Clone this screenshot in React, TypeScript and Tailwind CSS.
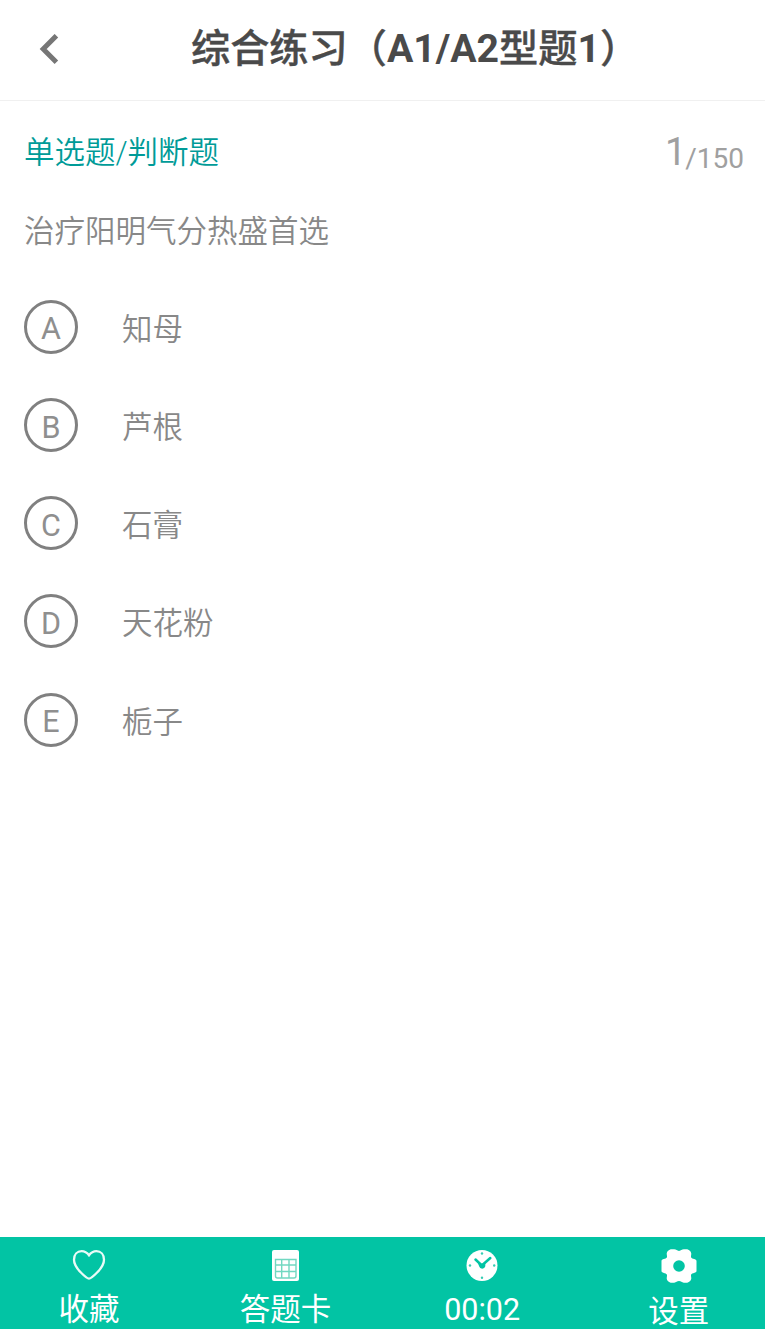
import React from "react";

type Option = { key: string; text: string };

const options: Option[] = [
  { key: "A", text: "知母" },
  { key: "B", text: "芦根" },
  { key: "C", text: "石膏" },
  { key: "D", text: "天花粉" },
  { key: "E", text: "栀子" },
];

const BackIcon = () => (
  <svg width="20" height="30" viewBox="0 0 20 30" fill="none">
    <path d="M17.4 1.7 4.2 15l13.2 13.2" stroke="#767676" strokeWidth="5" />
  </svg>
);

const HeartIcon = () => (
  <svg width="34" height="32" viewBox="0 0 34 32" fill="none">
    <path
      d="M17 29.7C15.4 29.7 2 19.6 2 10.7 2 5.5 5.2 2.2 9.6 2.2c3.4 0 5.4 1.4 7.4 4.1 2-2.7 4-4.1 7.4-4.1 4.4 0 7.6 3.3 7.6 8.5 0 8.900-13.400 19-15 19Z"
      stroke="#e9fbf7"
      strokeWidth="2.3"
    />
  </svg>
);

const CardIcon = () => (
  <svg width="27" height="32" viewBox="0 0 27 32" fill="none">
    <rect y="1" width="27" height="31" rx="2" fill="#fff" />
    <path
      d="M3.5 10.5H24V27a2 2 0 0 1-2 2H5.500a2 2 0 0 1-2-2ZM3.500 16H24M3.500 22.500H24M9.700 10.500V29M17 10.500V29"
      stroke="#72d8c1"
      strokeWidth="1.4"
    />
  </svg>
);

const ClockIcon = () => (
  <svg width="32" height="32" viewBox="0 0 32 32" fill="none">
    <circle cx="16" cy="16.5" r="15.5" fill="#fff" />
    <path d="m9.5 10.5 6.3 6L24.300 9" stroke="#02c4a4" strokeWidth="2.5" strokeLinecap="round" />
    <path d="M11.5 12.800 16 14.800l3.300-1.300v3.800a3.200 3.200 0 0 1-6.200 0Z" fill="#02c4a4" />
    <g fill="#35cdb3">
      <circle cx="16" cy="4.5" r="1.2" />
      <circle cx="28.2" cy="16.5" r="1.2" />
      <circle cx="16" cy="28.7" r="1.2" />
      <circle cx="4" cy="16.5" r="1.2" />
    </g>
  </svg>
);

// six rounded lobes around a hub
const GearIcon = () => (
  <svg width="36" height="34" viewBox="0 0 36 34" fill="none">
    <path
      d="M10.5.3h2.7c2 0 2.800 1.600 4.800 1.600S20.800.3 22.800.3h2.700c2.200 0 4.800 2.300 4.800 4.500 0 1.500-.7 2.400-.1 3.700.8 1.500 5.300 1.400 5.300 3.400v10.200c0 2-4.500 1.900-5.300 3.400-.6 1.300.1 2.200.1 3.700 0 2.200-2.600 4.500-4.800 4.500h-2.700c-2 0-2.800-1.600-4.800-1.600s-2.800 1.600-4.800 1.600h-2.700c-2.200 0-4.800-2.300-4.800-4.500 0-1.500.7-2.400.1-3.700C5 24 .5 24.100.5 22.100V11.900c0-2 4.500-1.900 5.300-3.400.6-1.300-.1-2.200-.1-3.700C5.700 2.600 8.300.3 10.500.3Z"
      fill="#fff"
    />
    <circle cx="18" cy="17" r="5.8" fill="#02c4a4" />
  </svg>
);

const tabs = [
  { label: "收藏", icon: <HeartIcon /> },
  { label: "答题卡", icon: <CardIcon /> },
  { label: "00:02", icon: <ClockIcon /> },
  { label: "设置", icon: <GearIcon /> },
];

const App = () => {
  return (
    <div className="flex h-[1329px] w-[765px] flex-col overflow-hidden bg-white font-['Roboto','Noto_Sans_CJK_SC',sans-serif] text-[30.5px] text-[#888]">
      {/* title bar */}
      <header className="flex h-[101px] shrink-0 border-b border-[#f0f0f0] pl-[39px] text-[#4a4a4a]">
        <button className="flex h-[98px] w-[152px] items-center">
          <BackIcon />
        </button>
        <h1 className="text-[39.2px] leading-[98px] font-medium whitespace-nowrap [-webkit-text-stroke:0.4px_#4a4a4a]">
          综合练习（<b className="font-bold [-webkit-text-stroke:0]">A1/A2</b>型题
          <b className="font-bold [-webkit-text-stroke:0]">1</b>）
        </h1>
      </header>

      <main className="flex grow flex-col pr-[21px] pl-6">
        <div className="flex h-[98px] items-start justify-between">
          <span className="leading-[103px] font-[350] text-[#009b98]">单选题/判断题</span>
          <div className="flex text-[#a0a0a0]">
            <span className="-mr-px text-[38px] leading-[102px]">1</span>
            <span className="text-[28px] leading-[115px]">/150</span>
          </div>
        </div>
        <p className="h-[100.5px] leading-[66px] font-[350]">治疗阳明气分热盛首选</p>

        {/* answers */}
        <ul className="flex flex-col gap-[44.3px]">
          {options.map((option) => (
            <li key={option.key} className="flex h-[54px] items-center gap-11">
              <span className="flex size-[54px] items-center justify-center rounded-full border-3 border-[#808080] pt-1.5 leading-none text-[#8f8f8f]">
                {option.key}
              </span>
              <span className="pt-1.5 leading-[56px] font-[350]">{option.text}</span>
            </li>
          ))}
        </ul>
      </main>

      <nav className="flex h-[92px] shrink-0 gap-[24.6px] bg-[#02c4a4] pl-[3px] text-white">
        {tabs.map((tab) => (
          <button key={tab.label} className="flex w-[172px] shrink-0 flex-col items-center pt-3">
            <span className="flex h-[34px] items-center">{tab.icon}</span>
            <span className="leading-[58px]">{tab.label}</span>
          </button>
        ))}
      </nav>
    </div>
  );
};

export default App;
